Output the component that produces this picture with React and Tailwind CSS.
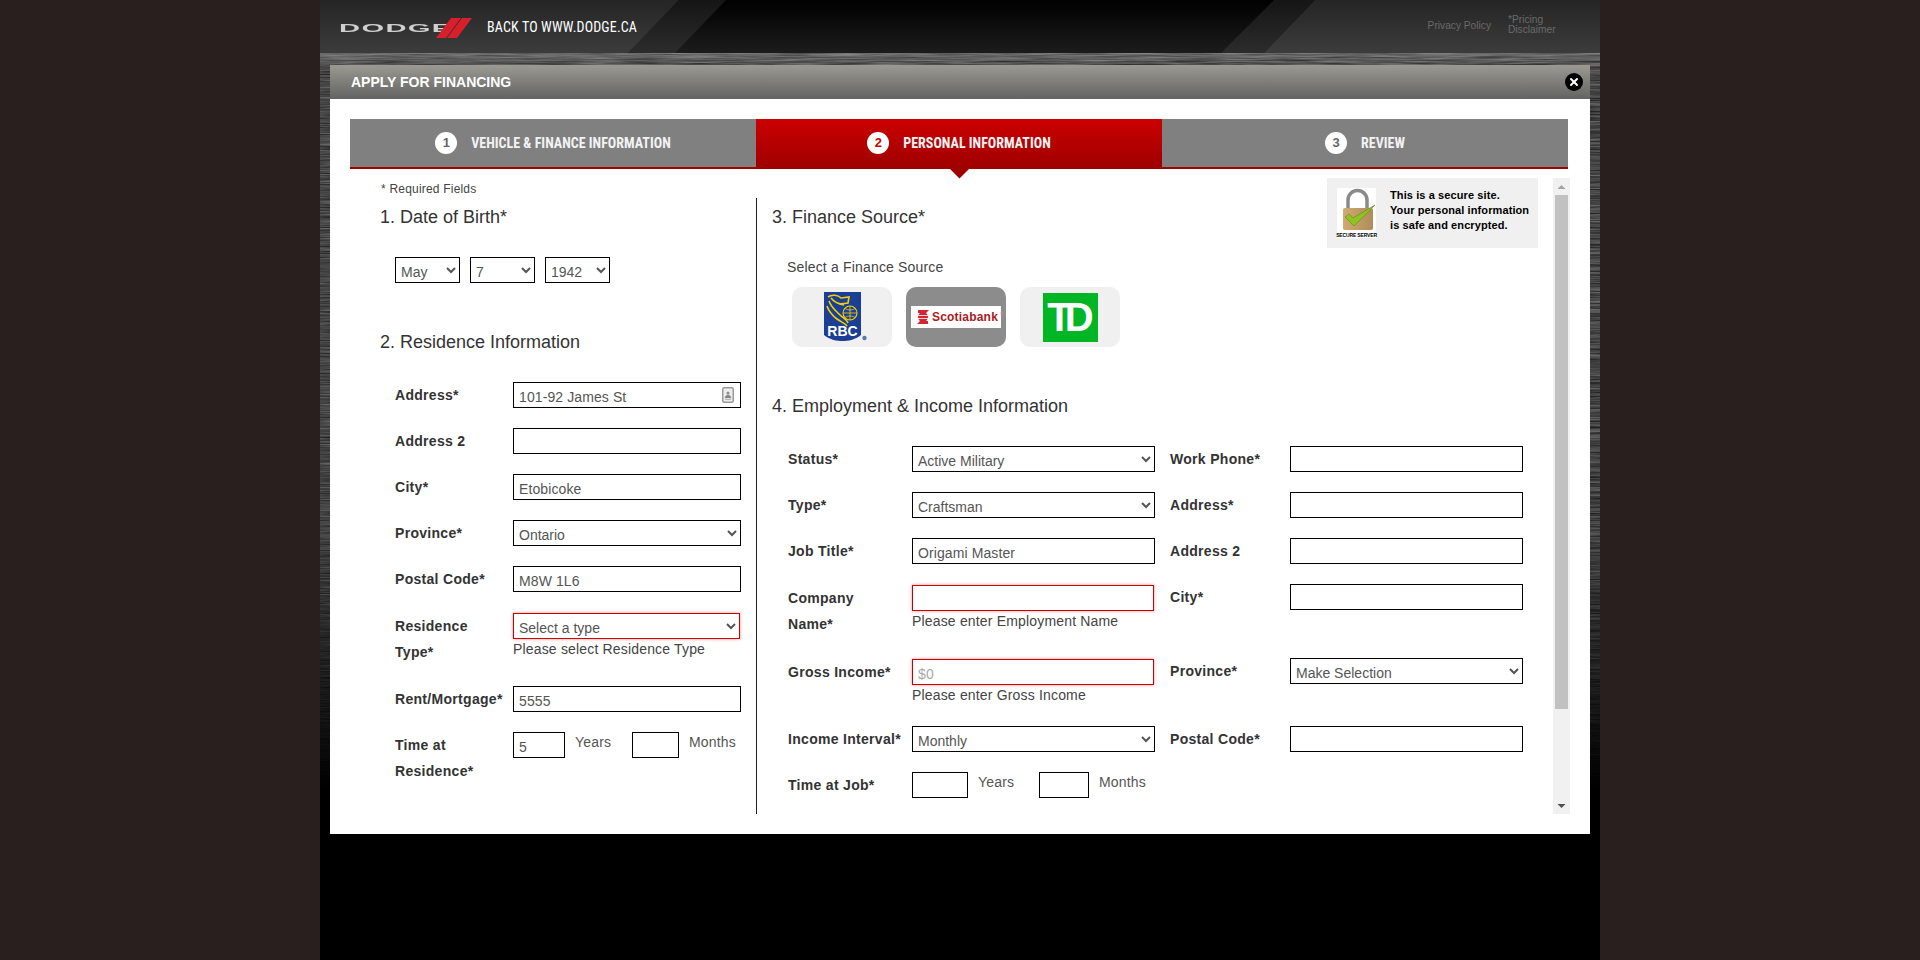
import { X } from "lucide-react"

const inputClass =
  "box-border block h-[26px] border border-black bg-white pl-[5px] pt-[3px] text-[14px] tracking-[0.1px] text-[#555] outline-none placeholder:text-[#aaa]"
const selectClass =
  "box-border block h-[26px] border border-black bg-white pl-[1px] pt-[3px] text-[14px] text-[#555] outline-none"
const errorClass = "border-[#c00]! shadow-[0_0_3px_rgba(220,0,0,0.45)]"

const Row = ({ label, labelWidth, className = "", children }) => (
  <div className={`flex items-start ${className}`}>
    <div
      className={`shrink-0 text-[14px] leading-[26px] font-bold tracking-[0.3px] text-[#333] ${labelWidth}`}
    >
      {label}
    </div>
    <div>{children}</div>
  </div>
)

const Tab = ({ num, title, active }) => (
  <div
    className={`flex flex-1 items-center justify-center gap-[14px] ${
      active
        ? "relative h-[50px] bg-linear-to-b from-[#cc0000] to-[#9e0000] pb-[2px]"
        : "h-[50px] border-b-2 border-[#a00000] bg-[#808080]"
    }`}
  >
    <span
      className={`flex h-[22px] w-[22px] items-center justify-center rounded-full bg-white text-[13px] font-bold ${
        active ? "text-[#c00]" : "text-[#666]"
      }`}
    >
      {num}
    </span>
    <span className="font-['Liberation_Sans_Narrow','Roboto_Condensed',Roboto,sans-serif] text-[14px] font-bold text-[#f2f2f2]">
      {title}
    </span>
    {active && (
      <svg className="absolute top-[50px] left-[194px]" width="19" height="10">
        <polygon points="0,0 19,0 9.5,9.5" fill="#9e0000" />
      </svg>
    )}
  </div>
)

const HeaderArt = () => (
  <svg className="absolute inset-0" width="1280" height="53">
    <defs>
      <linearGradient id="hdBase" x1="0" y1="0" x2="0" y2="1">
        <stop offset="0" stopColor="#000" />
        <stop offset="1" stopColor="#1c1c1c" />
      </linearGradient>
      <linearGradient id="hdPanel" x1="0" y1="0" x2="0" y2="1">
        <stop offset="0" stopColor="#252525" />
        <stop offset="1" stopColor="#3c3c3c" />
      </linearGradient>
      <linearGradient id="hdBand" x1="0" y1="0" x2="0" y2="1">
        <stop offset="0" stopColor="#151515" />
        <stop offset="1" stopColor="#2c2c2c" />
      </linearGradient>
    </defs>
    <rect width="1280" height="53" fill="url(#hdBase)" />
    <polygon points="359,0 406,0 355,53 308,53" fill="url(#hdBand)" />
    <polygon points="0,0 359,0 308,53 0,53" fill="url(#hdPanel)" />
    <polygon points="954,0 995,0 944,53 901,53" fill="url(#hdBand)" />
    <polygon points="995,0 1280,0 1280,53 944,53" fill="url(#hdPanel)" />
  </svg>
)

const MetalTexture = () => (
  <svg className="absolute top-[53px] left-0" width="1280" height="760">
    <defs>
      <filter
        id="brushed"
        x="0"
        y="0"
        width="100%"
        height="100%"
        colorInterpolationFilters="sRGB"
      >
        <feTurbulence type="fractalNoise" baseFrequency="0.02 0.7" numOctaves="3" seed="7" />
        <feColorMatrix values="0.45 0 0 0 0.05 0.45 0 0 0 0.05 0.45 0 0 0 0.05 0 0 0 0 1" />
      </filter>
      <linearGradient id="fade" x1="0" y1="0" x2="0" y2="1">
        <stop offset="0" stopColor="#000" stopOpacity="0" />
        <stop offset="0.62" stopColor="#000" stopOpacity="0.05" />
        <stop offset="0.97" stopColor="#000" stopOpacity="1" />
      </linearGradient>
      <linearGradient id="topGlow" x1="0" y1="0" x2="0" y2="1">
        <stop offset="0" stopColor="#fff" stopOpacity="0.2" />
        <stop offset="1" stopColor="#fff" stopOpacity="0" />
      </linearGradient>
    </defs>
    <rect width="1280" height="760" filter="url(#brushed)" />
    <rect width="1280" height="760" fill="url(#fade)" />
    <rect width="1280" height="16" fill="url(#topGlow)" />
  </svg>
)

const DodgeLogo = () => (
  <div className="relative h-[20px] w-[133px]">
    <span className="absolute top-[1px] left-0 origin-left scale-x-[2.65] text-[11px] leading-[18px] font-bold tracking-[0.5px] text-[#cfcfcf]">
      DODGE
    </span>
    <svg className="absolute top-0 left-0" width="133" height="20">
      <polygon points="112,0 122,0 107,20 97,20" fill="#d8202a" />
      <polygon points="123,0 133,0 118,20 108,20" fill="#d8202a" />
    </svg>
  </div>
)

const LockIcon = () => (
  <div className="flex h-[50px] w-[39px] shrink-0 flex-col items-center bg-white">
    <svg width="39" height="44" viewBox="0 0 39 44">
      <defs>
        <linearGradient id="lockBody" x1="0" y1="0" x2="1" y2="0">
          <stop offset="0" stopColor="#d0aa72" />
          <stop offset="1" stopColor="#b08c58" />
        </linearGradient>
      </defs>
      <path d="M11 21V12a9.500 9.500 0 0 1 19 0v9" fill="none" stroke="#8a8a8a" strokeWidth="3.5" />
      <rect x="6" y="20" width="30" height="22" rx="2" fill="url(#lockBody)" />
      <path d="M8 29l4-3 4 4L38 17 17 38z" fill="#8fc31f" stroke="#5f8a1a" strokeWidth="0.6" />
    </svg>
    <span className="text-[5px] leading-[6px] font-bold tracking-[-0.15px] whitespace-nowrap text-black">
      SECURE SERVER
    </span>
  </div>
)

const RbcLogo = () => (
  <svg width="48" height="50" viewBox="0 0 48 50">
    <path d="M0 0h37v43c-6 5-13 6-18.500 6S6 48 0 43z" fill="#1b3f94" />
    <g fill="none" stroke="#f5d000" strokeWidth="1.6">
      <path d="M4 5c4-3 10-2 13 1l8-1-1 6-8 1" />
      <path d="M5 9c2 6 6 9 10 13s8 6 9 9" />
      <path d="M3 14c2 6 6 10 10 13s8 4 10 7" />
      <path d="M7 6c3 4 8 6 13 7" />
      <circle cx="26" cy="21" r="7" strokeWidth="1.1" />
      <path d="M19 21h14M26 14v14M21 16.500c3 2 7 2 10 0M21 25.500c3-2 7-2 10 0" strokeWidth="0.8" />
    </g>
    <text x="18.500" y="44" textAnchor="middle" fill="#fff" fontSize="14" fontWeight="700">
      RBC
    </text>
    <circle cx="40.500" cy="46" r="2.200" fill="#5a78b8" />
  </svg>
)

const ScotiaLogo = () => (
  <div className="flex h-[22px] w-[90px] items-center gap-[2px] bg-white pl-[5px]">
    <svg className="shrink-0" width="14" height="16" viewBox="0 0 14 16">
      <circle cx="7" cy="8" r="5" fill="#d22630" />
      <path d="M2 1h11l-3 3H2zM12 15H1l3-3h8z" fill="#d22630" />
      <path d="M2 6.500h10M2 9.500h10" stroke="#fff" strokeWidth="0.8" />
    </svg>
    <span className="text-[12px] leading-none font-bold tracking-[0.2px] text-[#a81c22]">
      Scotiabank
    </span>
    <span className="-mt-[6px] text-[5px] leading-none text-[#d98a8a]">®</span>
  </div>
)

const FinanceTile = ({ selected, children }) => (
  <div
    className={`flex h-[60px] w-[100px] items-center justify-center rounded-[10px] ${
      selected ? "bg-[#8c8c8c]" : "bg-[#f0f0f0]"
    }`}
  >
    {children}
  </div>
)

const Scrollbar = () => (
  <div className="mt-[9px] mr-px flex h-[636px] w-[17px] shrink-0 flex-col items-center self-start bg-[#f1f1f1]">
    <svg className="h-[17px] shrink-0" width="9" height="17">
      <polygon points="0.500,11 4.500,7 8.500,11" fill="#a3a3a3" />
    </svg>
    <div className="h-[514px] w-[13px] shrink-0 bg-[#c1c1c1]" />
    <div className="flex-1" />
    <svg className="h-[17px] shrink-0" width="9" height="17">
      <polygon points="0.500,7 8.500,7 4.500,11" fill="#505050" />
    </svg>
  </div>
)

const App = () => {
  return (
    <div className="flex h-[960px] justify-center overflow-hidden bg-[#281f1e] font-['Liberation_Sans',Arial,sans-serif]">
      <div className="relative h-[960px] w-[1280px] bg-black">
        <MetalTexture />

        {/* top bar */}
        <div className="relative flex h-[53px] items-start">
          <HeaderArt />
          <div className="relative ml-[19px] mt-[18px]">
            <DodgeLogo />
          </div>
          <a className="relative ml-[15px] mt-[18px] font-['Liberation_Sans_Narrow','Roboto_Condensed',Roboto,sans-serif] text-[14px] leading-[18px] tracking-[0.15px] text-white">
            BACK TO WWW.DODGE.CA
          </a>
          <a className="relative ml-auto mt-[19px] text-[10.2px] leading-[13px] text-[#6a6a6a]">
            Privacy Policy
          </a>
          <a className="relative mr-[42px] ml-[17px] mt-[15px] w-[50px] text-[10.2px] leading-[10px] text-[#6a6a6a]">
            *Pricing Disclaimer
          </a>
        </div>

        {/* modal */}
        <div className="relative mx-[10px] mt-[12px] w-[1260px]">
          <div className="flex h-[34px] items-center justify-between bg-linear-to-b from-[#9b9a92] to-[#636363] pr-[7px] pl-[21px]">
            <span className="text-[14px] font-bold text-white">APPLY FOR FINANCING</span>
            <span className="flex h-[18px] w-[18px] items-center justify-center rounded-full bg-black">
              <X size={12} strokeWidth={4} className="text-white" />
            </span>
          </div>

          <div className="h-[735px] bg-white pt-[20px] pl-[20px]">
            <div className="flex w-[1218px]">
              <Tab num="1" title="VEHICLE & FINANCE INFORMATION" />
              <Tab num="2" title="PERSONAL INFORMATION" active />
              <Tab num="3" title="REVIEW" />
            </div>

            <div className="relative flex h-[645px] w-[1221px]">
              {/* left column */}
              <div className="w-[406px] shrink-0 pt-[13px] pl-[31px]">
                <div className="text-[12px] leading-[14px] tracking-[0.2px] text-[#444]">
                  * Required Fields
                </div>
                <h2 className="mt-[9px] -ml-px text-[18px] leading-[24px] text-[#333]">
                  1. Date of Birth*
                </h2>
                <div className="mt-[28px] ml-[14px] flex gap-[10px]">
                  <select defaultValue="May" className={`${selectClass} w-[65px]`}>
                    <option>May</option>
                  </select>
                  <select defaultValue="7" className={`${selectClass} w-[65px]`}>
                    <option>7</option>
                  </select>
                  <select defaultValue="1942" className={`${selectClass} w-[65px]`}>
                    <option>1942</option>
                  </select>
                </div>
                <h2 className="mt-[47px] -ml-px text-[18px] leading-[24px] text-[#333]">
                  2. Residence Information
                </h2>

                <div className="mt-[28px] ml-[14px]">
                  <Row label="Address*" labelWidth="w-[118px]">
                    <div className="relative">
                      <input defaultValue="101-92 James St" className={`${inputClass} w-[228px]`} />
                      <svg className="absolute top-[5px] right-[7px]" width="12" height="16" viewBox="0 0 12 16">
                        <rect x="0.750" y="0.750" width="10.500" height="14.500" rx="1.500" fill="#eee" stroke="#999" strokeWidth="1.500" />
                        <circle cx="6" cy="6" r="1.500" fill="#888" />
                        <path d="M3 11c0-4 6-4 6 0zM3 12.500h6" fill="#888" stroke="#888" strokeWidth="0.500" />
                      </svg>
                    </div>
                  </Row>
                  <Row label="Address 2" labelWidth="w-[118px]" className="mt-[20px]">
                    <input className={`${inputClass} w-[228px]`} />
                  </Row>
                  <Row label="City*" labelWidth="w-[118px]" className="mt-[20px]">
                    <input defaultValue="Etobicoke" className={`${inputClass} w-[228px]`} />
                  </Row>
                  <Row label="Province*" labelWidth="w-[118px]" className="mt-[20px]">
                    <select defaultValue="Ontario" className={`${selectClass} w-[228px]`}>
                      <option>Ontario</option>
                    </select>
                  </Row>
                  <Row label="Postal Code*" labelWidth="w-[118px]" className="mt-[20px]">
                    <input defaultValue="M8W 1L6" className={`${inputClass} w-[228px]`} />
                  </Row>
                  <Row
                    label={<>Residence<br />Type*</>}
                    labelWidth="w-[118px]"
                    className="mt-[21px]"
                  >
                    <select className={`${selectClass} ${errorClass} w-[227px]`}>
                      <option>Select a type</option>
                    </select>
                    <div className="mt-[2px] text-[14px] leading-[16px] tracking-[0.17px] text-[#444]">
                      Please select Residence Type
                    </div>
                  </Row>
                  <Row label="Rent/Mortgage*" labelWidth="w-[118px]" className="mt-[21px]">
                    <input defaultValue="5555" className={`${inputClass} w-[228px]`} />
                  </Row>
                  <Row
                    label={<>Time at<br />Residence*</>}
                    labelWidth="w-[118px]"
                    className="mt-[20px]"
                  >
                    <div className="flex items-start text-[14px] leading-[20px] tracking-[0.17px] text-[#555]">
                      <input defaultValue="5" className={`${inputClass} w-[52px]`} />
                      <span className="ml-[10px] w-[57px]">Years</span>
                      <input className={`${inputClass} w-[47px]`} />
                      <span className="ml-[10px]">Months</span>
                    </div>
                  </Row>
                </div>
              </div>

              {/* divider */}
              <div className="mt-[29px] w-px shrink-0 bg-[#222]" />

              {/* right column */}
              <div className="flex-1 pt-[36px] pl-[15px]">
                <h2 className="text-[18px] leading-[24px] text-[#333]">3. Finance Source*</h2>
                <div className="mt-[28px] ml-[15px] text-[14px] leading-[20px] tracking-[0.17px] text-[#444]">
                  Select a Finance Source
                </div>
                <div className="mt-[10px] ml-[20px] flex gap-[14px]">
                  <FinanceTile>
                    <span className="ml-[11px] flex">
                      <RbcLogo />
                    </span>
                  </FinanceTile>
                  <FinanceTile selected>
                    <ScotiaLogo />
                  </FinanceTile>
                  <FinanceTile>
                    <div className="flex h-[49px] w-[55px] items-center justify-center bg-[#00b624] text-[40px] leading-none font-bold tracking-[-7px] text-white">
                      <span className="-ml-[6px]">TD</span>
                    </div>
                  </FinanceTile>
                </div>
                <h2 className="mt-[47px] text-[18px] leading-[24px] text-[#333]">
                  4. Employment &amp; Income Information
                </h2>

                <div className="mt-[28px] ml-[16px] flex">
                  <div className="w-[382px] shrink-0">
                    <Row label="Status*" labelWidth="w-[124px]">
                      <select className={`${selectClass} w-[243px]`}>
                        <option>Active Military</option>
                      </select>
                    </Row>
                    <Row label="Type*" labelWidth="w-[124px]" className="mt-[20px]">
                      <select className={`${selectClass} w-[243px]`}>
                        <option>Craftsman</option>
                      </select>
                    </Row>
                    <Row label="Job Title*" labelWidth="w-[124px]" className="mt-[20px]">
                      <input defaultValue="Origami Master" className={`${inputClass} w-[243px]`} />
                    </Row>
                    <Row
                      label={<>Company<br />Name*</>}
                      labelWidth="w-[124px]"
                      className="mt-[21px]"
                    >
                      <input className={`${inputClass} ${errorClass} w-[242px]`} />
                      <div className="mt-[2px] text-[14px] leading-[16px] tracking-[0.17px] text-[#444]">
                        Please enter Employment Name
                      </div>
                    </Row>
                    <Row label="Gross Income*" labelWidth="w-[124px]" className="mt-[22px]">
                      <input placeholder="$0" className={`${inputClass} ${errorClass} w-[242px]`} />
                      <div className="mt-[2px] text-[14px] leading-[16px] tracking-[0.17px] text-[#444]">
                        Please enter Gross Income
                      </div>
                    </Row>
                    <Row label="Income Interval*" labelWidth="w-[124px]" className="mt-[23px]">
                      <select className={`${selectClass} w-[243px]`}>
                        <option>Monthly</option>
                      </select>
                    </Row>
                    <Row label="Time at Job*" labelWidth="w-[124px]" className="mt-[20px]">
                      <div className="flex items-start text-[14px] leading-[20px] tracking-[0.17px] text-[#555]">
                        <input className={`${inputClass} w-[56px]`} />
                        <span className="ml-[10px] w-[61px]">Years</span>
                        <input className={`${inputClass} w-[50px]`} />
                        <span className="ml-[10px]">Months</span>
                      </div>
                    </Row>
                  </div>

                  <div className="shrink-0">
                    <Row label="Work Phone*" labelWidth="w-[120px]">
                      <input className={`${inputClass} w-[233px]`} />
                    </Row>
                    <Row label="Address*" labelWidth="w-[120px]" className="mt-[20px]">
                      <input className={`${inputClass} w-[233px]`} />
                    </Row>
                    <Row label="Address 2" labelWidth="w-[120px]" className="mt-[20px]">
                      <input className={`${inputClass} w-[233px]`} />
                    </Row>
                    <Row label="City*" labelWidth="w-[120px]" className="mt-[20px]">
                      <input className={`${inputClass} w-[233px]`} />
                    </Row>
                    <Row label="Province*" labelWidth="w-[120px]" className="mt-[48px]">
                      <select className={`${selectClass} w-[233px]`}>
                        <option>Make Selection</option>
                      </select>
                    </Row>
                    <Row label="Postal Code*" labelWidth="w-[120px]" className="mt-[42px]">
                      <input className={`${inputClass} w-[233px]`} />
                    </Row>
                  </div>
                </div>
              </div>

              <Scrollbar />

              {/* secure site note */}
              <div className="absolute top-[9px] right-[33px] flex h-[70px] w-[211px] items-start gap-[14px] bg-[#f0f0f0] pt-[10px] pl-[10px]">
                <LockIcon />
                <div className="text-[11px] leading-[15px] font-bold tracking-[0.1px] text-black">
                  This is a secure site.
                  <br />
                  Your personal information
                  <br />
                  is safe and encrypted.
                </div>
              </div>
            </div>
          </div>
        </div>
      </div>
    </div>
  )
}

export default App
